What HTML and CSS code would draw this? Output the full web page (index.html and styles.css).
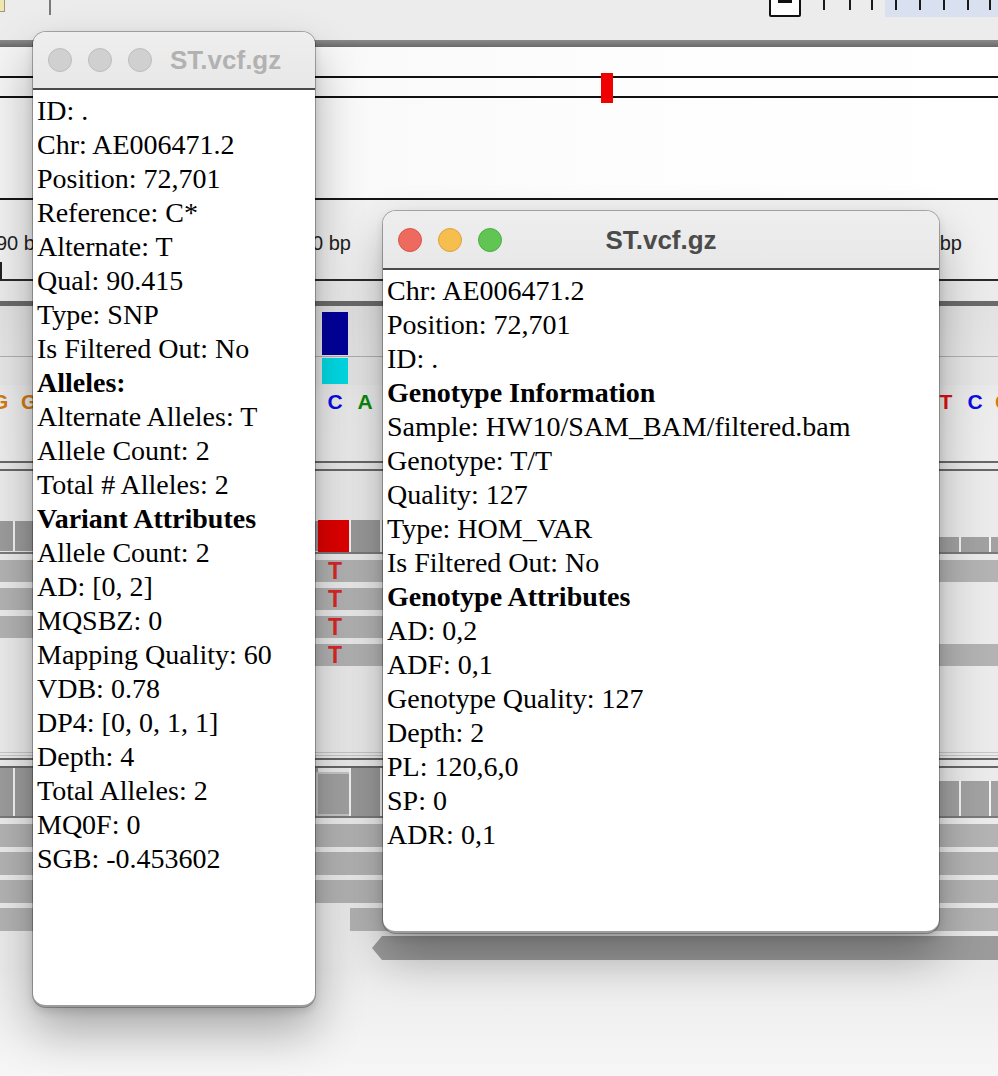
FILE: index.html
```html
<!DOCTYPE html>
<html lang="en">
<head>
<meta charset="utf-8">
<title>ST.vcf.gz</title>
<link rel="stylesheet" href="styles.css">
</head>
<body>
<div class="screen">
  <div class="igv">
    <div class="stripe toolbar">
      <span class="tb-icon"></span>
      <span class="tb-vline"></span>
      <span class="tb-zoombox"><span class="tb-dash"></span></span>
      <span class="tick" style="left:823px"></span>
      <span class="tick" style="left:849px"></span>
      <span class="tick" style="left:871px"></span>
      <span class="tb-range"></span>
      <span class="tick" style="left:895px"></span>
      <span class="tick" style="left:919px"></span>
      <span class="tick" style="left:943px"></span>
      <span class="tick" style="left:967px"></span>
      <span class="tick" style="left:989px"></span>
    </div>
    <div class="stripe gray-bar"></div>
    <div class="stripe ideogram">
      <span class="ideo-line ideo-top"></span>
      <span class="ideo-line ideo-bottom"></span>
      <span class="ideo-mark"></span>
    </div>
    <div class="stripe black-line"></div>
    <div class="stripe ruler">
      <span class="ruler-label" style="left:-4px">90 bp</span>
      <span class="ruler-label" style="left:312px">0 bp</span>
      <span class="ruler-label" style="left:923px">0 bp</span>
      <span class="ruler-tick"></span>
    </div>
    <div class="stripe black-line thin"></div>
    <div class="stripe gap-a"></div>
    <div class="stripe dark-bar"></div>
    <div class="stripe track-a"><span class="bar-blue"></span></div>
    <div class="stripe light-line"></div>
    <div class="stripe track-b"><span class="bar-cyan"></span></div>
    <div class="stripe sequence">
      <span class="base base-g" style="left:-8px">G</span>
      <span class="base base-g" style="left:21px">G</span>
      <span class="base base-c" style="left:327px">C</span>
      <span class="base base-a" style="left:357px">A</span>
      <span class="base base-t" style="left:938px">T</span>
      <span class="base base-c" style="left:967px">C</span>
      <span class="base base-g" style="left:995px">G</span>
    </div>
    <div class="stripe double-lines"></div>
    <div class="stripe coverage-a">
      <span class="cells" style="left:0;width:318px;top:50px;height:30px"></span>
      <span class="cell-red" style="left:318px;width:30.5px;top:49px;height:32px"></span>
      <span class="cells cells-gap" style="left:348.5px;width:70px;top:49px;height:32px"></span>
      <span class="cells cells-right" style="left:930px;width:80px;top:66px;height:15px"></span>
    </div>
    <div class="stripe cov-line"></div>
    <div class="stripe reads-a">
      <span class="read" style="left:-10px;width:1020px;top:6px"></span>
      <span class="read" style="left:-10px;width:700px;top:34px"></span>
      <span class="read" style="left:-10px;width:700px;top:62px"></span>
      <span class="read" style="left:120px;width:900px;top:90px"></span>
      <span class="mis" style="top:6px">T</span>
      <span class="mis" style="top:34px">T</span>
      <span class="mis" style="top:62px">T</span>
      <span class="mis" style="top:90px">T</span>
    </div>
    <div class="stripe panel-lines"></div>
    <div class="stripe coverage-b">
      <span class="cells" style="left:0;width:318px;top:0;height:48px"></span>
      <span class="cells cells-soft" style="left:316px;width:32.5px;top:4px;height:44px"></span>
      <span class="cells cells-gap" style="left:348.5px;width:70px;top:0;height:48px"></span>
      <span class="cells cells-right" style="left:930px;width:80px;top:13px;height:35px"></span>
    </div>
    <div class="stripe cov-line"></div>
    <div class="stripe reads-b">
      <span class="read" style="left:-10px;width:1020px;top:6px"></span>
      <span class="read" style="left:-10px;width:1020px;top:34px"></span>
      <span class="read" style="left:-10px;width:1020px;top:62px"></span>
      <span class="read" style="left:-10px;width:200px;top:90px"></span>
      <span class="read" style="left:350px;width:660px;top:90px"></span>
      <span class="read read-arrow" style="left:372px;width:640px;top:118px"></span>
    </div>
  </div>

  <section class="win win-left">
    <header class="titlebar">
      <span class="lights"><i class="light off"></i><i class="light off"></i><i class="light off"></i></span>
      <span class="title title-inactive">ST.vcf.gz</span>
    </header>
    <div class="content">
      <p>ID: .</p>
      <p>Chr: AE006471.2</p>
      <p>Position: 72,701</p>
      <p>Reference: C*</p>
      <p>Alternate: T</p>
      <p>Qual: 90.415</p>
      <p>Type: SNP</p>
      <p>Is Filtered Out: No</p>
      <p class="head">Alleles:</p>
      <p>Alternate Alleles: T</p>
      <p>Allele Count: 2</p>
      <p>Total # Alleles: 2</p>
      <p class="head">Variant Attributes</p>
      <p>Allele Count: 2</p>
      <p>AD: [0, 2]</p>
      <p>MQSBZ: 0</p>
      <p>Mapping Quality: 60</p>
      <p>VDB: 0.78</p>
      <p>DP4: [0, 0, 1, 1]</p>
      <p>Depth: 4</p>
      <p>Total Alleles: 2</p>
      <p>MQ0F: 0</p>
      <p>SGB: -0.453602</p>
    </div>
  </section>

  <section class="win win-right">
    <header class="titlebar">
      <span class="lights"><i class="light red"></i><i class="light yellow"></i><i class="light green"></i></span>
      <span class="title title-active">ST.vcf.gz</span>
    </header>
    <div class="content">
      <p>Chr: AE006471.2</p>
      <p>Position: 72,701</p>
      <p>ID: .</p>
      <p class="head">Genotype Information</p>
      <p>Sample: HW10/SAM_BAM/filtered.bam</p>
      <p>Genotype: T/T</p>
      <p>Quality: 127</p>
      <p>Type: HOM_VAR</p>
      <p>Is Filtered Out: No</p>
      <p class="head">Genotype Attributes</p>
      <p>AD: 0,2</p>
      <p>ADF: 0,1</p>
      <p>Genotype Quality: 127</p>
      <p>Depth: 2</p>
      <p>PL: 120,6,0</p>
      <p>SP: 0</p>
      <p>ADR: 0,1</p>
    </div>
  </section>
</div>
</body>
</html>
```

FILE: styles.css
```css
* { box-sizing: border-box; margin: 0; padding: 0; }
html, body { width: 998px; height: 1076px; overflow: hidden; }
body { background: #efefef; font-family: "Liberation Sans", Arial, sans-serif; }

.screen { position: relative; width: 998px; height: 1076px; overflow: hidden; }

/* ---------- background genome browser ---------- */
.igv { display: flex; flex-direction: column; width: 998px; height: 1076px; }
.stripe { position: relative; flex: none; width: 100%; }

.toolbar { height: 40px; background: #ececec; }
.tb-icon { position: absolute; left: -4px; top: -2px; width: 9px; height: 14px; background: #efe6b0; border: 1px solid #9a9a7a; }
.tb-vline { position: absolute; left: 49px; top: 0; width: 2px; height: 15px; background: #7a7a7a; }
.tb-zoombox { position: absolute; left: 769px; top: -2px; width: 32px; height: 19px; background: #fff; border: 2px solid #111; border-radius: 0 0 2px 2px; }
.tb-dash { position: absolute; left: 7px; top: 0; width: 14px; height: 3px; background: #111; }
.tb-range { position: absolute; left: 885px; top: 0; width: 113px; height: 17px; background: #d9e0f0; }
.tick { position: absolute; top: 0; width: 2px; height: 10px; background: #1a1a1a; z-index: 1; }

.gray-bar { height: 7px; background: linear-gradient(#8a8a8a, #6a6a6a); }

.ideogram { height: 151px; background: linear-gradient(to right, #f4f4f4, #fdfdfd 60%, #ffffff); }
.ideo-line { position: absolute; left: 0; width: 100%; height: 2px; background: #111; }
.ideo-top { top: 29px; }
.ideo-bottom { top: 49px; }
.ideo-mark { position: absolute; left: 601px; top: 26px; width: 12px; height: 30px; background: #f00000; }

.black-line { height: 2px; background: #151515; }
.black-line.thin { height: 2px; background: #2a2a2a; }

.ruler { height: 79px; background: #f1f1f1; }
.ruler-label { position: absolute; top: 31px; font-size: 20px; line-height: 24px; color: #1e1e1e; white-space: nowrap; }
.ruler-tick { position: absolute; left: 0; top: 62px; width: 2px; height: 17px; background: #222; }

.gap-a { height: 20px; background: #ebebeb; }
.dark-bar { height: 5px; background: #6b6b6b; }

.track-a { height: 50px; background: linear-gradient(#e2e2e2, #e6e6e6); }
.bar-blue { position: absolute; left: 322px; top: 6px; width: 26px; height: 43px; background: #00009c; }
.light-line { height: 1px; background: #b0b0b0; }
.track-b { height: 28px; background: #e6e6e6; }
.bar-cyan { position: absolute; left: 322px; top: 1px; width: 26px; height: 26px; background: #00dbe5; }

.sequence { height: 76px; background: linear-gradient(#e9e9e9, #ececec 20%, #ededed); }
.base { position: absolute; top: 5px; width: 16px; text-align: center; font-weight: bold; font-size: 21px; line-height: 24px; }
.base-g { color: #d17a14; }
.base-c { color: #0a0ae6; }
.base-a { color: #0a8a0a; }
.base-t { color: #dc1010; }

.double-lines { height: 10px; background: linear-gradient(#686868 0 2px, #e9e9e9 2px 8px, #686868 8px 10px); }

.coverage-a { height: 81px; background: #ebebeb; }
.cells { position: absolute; background: repeating-linear-gradient(to right, #9c9c9c 0 13px, #f4f4f4 13px 15px, #9c9c9c 15px 30.5px); }
.cells-gap { background: repeating-linear-gradient(to right, #f4f4f4 0 2px, #9a9a9a 2px 30.5px); }
.cells-soft { background: #a2a2a2; border: 2px solid #c6c6c6; border-right: none; }
.cells-right { background: repeating-linear-gradient(to right, #a2a2a2 0 28.5px, #f4f4f4 28.5px 30.5px); }
.cell-red { position: absolute; background: #e00000; }
.cov-line { height: 2px; background: #7a7a7a; }

.reads-a { height: 198px; background: #ebebeb; }
.read { position: absolute; height: 22px; background: #b3b3b3; }
.mis { position: absolute; left: 327px; width: 16px; text-align: center; font-weight: bold; font-size: 23px; line-height: 22px; color: #d82828; }

.panel-lines { height: 16px; background: linear-gradient(#c6c6c6 0 1px, #ebebeb 1px 3px, #c6c6c6 3px 4px, #ebebeb 4px 6px, #666 6px 8px, #ebebeb 8px 14px, #666 14px 16px); }
.coverage-b { height: 48px; background: #ebebeb; }

.reads-b { flex: 1; background: linear-gradient(#ebebeb 0 150px, #eeeeee 170px, #f6f6f6); }
.reads-b .read { height: 23px; }
.read-arrow { height: 24px !important; background: #9b9b9b; clip-path: polygon(10px 0, 100% 0, 100% 100%, 10px 100%, 0 50%); }

/* ---------- floating windows ---------- */
.win {
  position: absolute;
  display: flex;
  flex-direction: column;
  background: #fff;
  border-radius: 13px;
  overflow: hidden;
  box-shadow: 0 0 0 1px rgba(0,0,0,0.28), 0 24px 48px rgba(0,0,0,0.3), 0 4px 10px rgba(0,0,0,0.14);
}
.win-left { left: 33px; top: 32px; width: 282px; height: 975px; border-bottom: 2px solid #9d9d9d; }
.win-right { left: 383px; top: 211px; width: 556px; height: 722px; border-bottom: 2px solid #9d9d9d; }

.titlebar {
  position: relative;
  flex: none;
  height: 58px;
  display: flex;
  align-items: center;
  padding-left: 15px;
  background: linear-gradient(#eeeeee, #e8e8e8);
  border-bottom: 2px solid #4a4a4a;
}
.win-right .titlebar { height: 59px; }
.lights { display: flex; gap: 16px; }
.light { display: block; width: 24px; height: 24px; border-radius: 50%; }
.light.off { background: #d0d0d0; border: 1px solid #bdbdbd; }
.light.red { background: #ee6a5e; border: 1px solid #d8564b; }
.light.yellow { background: #f5be4f; border: 1px solid #dea33a; }
.light.green { background: #61c554; border: 1px solid #4ead41; }

.title { font-family: "Liberation Sans", Arial, sans-serif; font-weight: bold; font-size: 26px; line-height: 30px; white-space: nowrap; }
.title-inactive { margin-left: 18px; color: #b2b2b2; }
.title-active { position: absolute; left: 0; right: 0; text-align: center; color: #4b4b4b; }

.content {
  flex: 1;
  padding: 4px 4px 0;
  font-family: "Liberation Serif", "Times New Roman", serif;
  font-size: 28px;
  line-height: 34px;
  color: #000;
  white-space: nowrap;
}
.content .head { font-weight: bold; }
```
